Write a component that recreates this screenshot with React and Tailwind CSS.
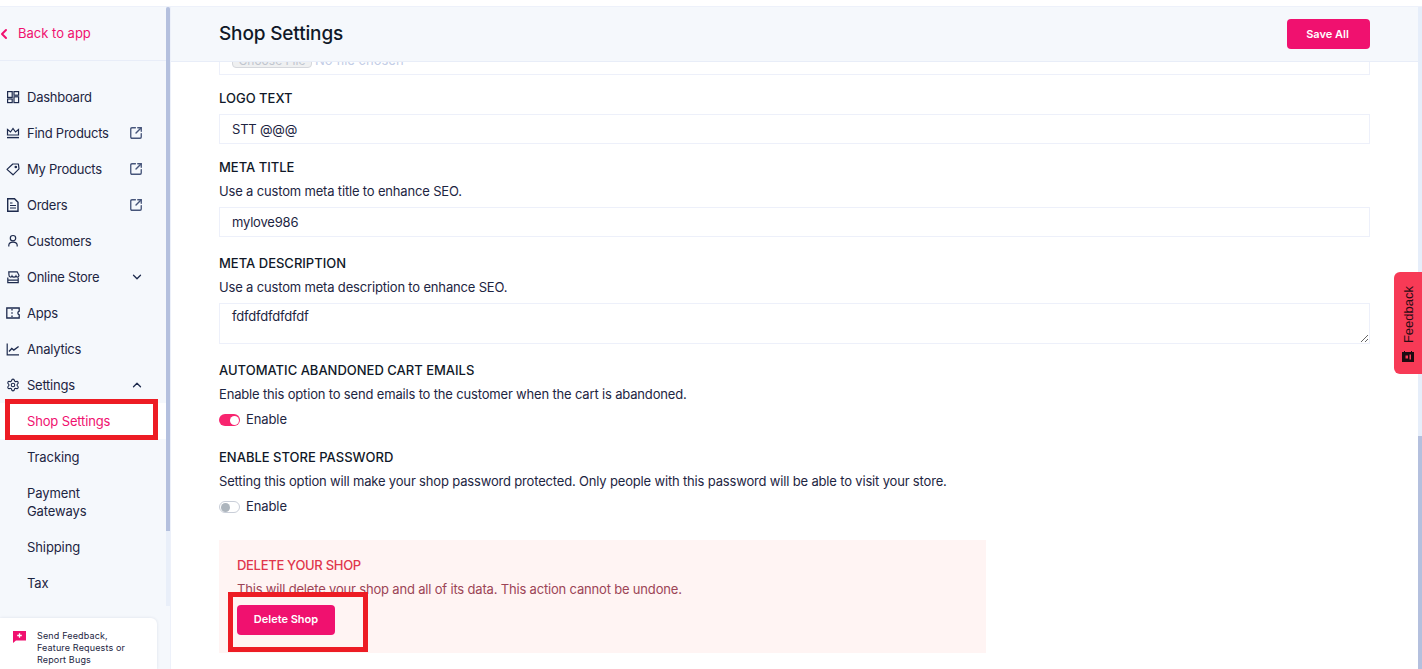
import React from 'react';
import { ChevronDown, ChevronLeft, ChevronUp, Settings, SquareArrowOutUpRight } from 'lucide-react';

const iconProps = {
  width: 14,
  height: 14,
  viewBox: '0 0 14 14',
  fill: 'none',
  stroke: '#1d2a4d',
  strokeWidth: 1.2,
  className: 'shrink-0',
};

const DashboardIcon = () => (
  <svg {...iconProps}>
    <rect x="1.600" y="1.600" width="4.600" height="5.800" />
    <rect x="8" y="1.600" width="4.600" height="3.600" />
    <rect x="1.600" y="9" width="4.600" height="3.600" />
    <rect x="8" y="6.800" width="4.600" height="5.800" />
  </svg>
);

const CrownIcon = () => (
  <svg {...iconProps}>
    <path d="M1.500 3.500l3 2.500L7 2.500 9.500 6l3-2.500V9h-11z" />
    <path d="M1 11.600h12" strokeWidth="1.400" />
  </svg>
);

const TagIcon = () => (
  <svg {...iconProps}>
    <path d="M1 7.400L6.800 2h5.600l.6 4.800-6 6z" strokeLinejoin="round" />
    <circle cx="9.800" cy="5" r="0.700" fill="#1d2a4d" />
  </svg>
);

const OrdersIcon = () => (
  <svg {...iconProps}>
    <path d="M1.700.8h6.800l3.500 3.500v8.900H1.700z" strokeWidth="1.400" />
    <path d="M4 5h2.500M4 7.500h6M4 10h6" />
  </svg>
);

const CustomerIcon = () => (
  <svg {...iconProps}>
    <circle cx="7" cy="4.200" r="2.700" />
    <path d="M2.800 12.600V11.500c0-2 1.600-3.300 4.200-3.300s4.200 1.300 4.200 3.300v1.100" />
  </svg>
);

const StoreIcon = () => (
  <svg {...iconProps}>
    <path d="M2.800 1.800h8.400l1.800 3.500c0 2-2.400 2.300-3 .7-.6 1.600-3.400 1.600-4 0-.6 1.600-3 1.300-3-.7z" />
    <path d="M1.800 7.500v5.200h10.400V7.500M1.800 10.200h10.400" />
  </svg>
);

const AppsIcon = () => (
  <svg {...iconProps}>
    <path d="M.8 2h12.400v3.200c-1.800.6-1.800 3 0 3.600V12H.8z" strokeWidth="1.300" />
    <path d="M6 3v1.400M6 6.300v1.400M6 9.600V11" strokeWidth="1.300" />
  </svg>
);

const AnalyticsIcon = () => (
  <svg {...iconProps}>
    <path d="M1.200 1.500v11.300h11.800" />
    <path d="M3 9.500l2.800-3 2 1.600L12.600 4.400" strokeWidth="1.300" />
  </svg>
);

const GearIcon = () => <Settings size={14} strokeWidth={1.9} className="shrink-0 text-[#1d2a4d]" />;

const navItems = [
  { label: 'Dashboard', icon: DashboardIcon },
  { label: 'Find Products', icon: CrownIcon, external: true },
  { label: 'My Products', icon: TagIcon, external: true },
  { label: 'Orders', icon: OrdersIcon, external: true },
  { label: 'Customers', icon: CustomerIcon },
  { label: 'Online Store', icon: StoreIcon, chevron: 'down' },
  { label: 'Apps', icon: AppsIcon },
  { label: 'Analytics', icon: AnalyticsIcon },
  { label: 'Settings', icon: GearIcon, chevron: 'up' },
];

const subItems = ['Tracking', 'Payment Gateways', 'Shipping', 'Tax'];

const NavRow = ({ item }) => {
  const Icon = item.icon;
  return (
    <div className="flex items-center h-9 pl-[6px] pr-[22px] text-[13px] leading-[18px] text-[#1d2542]">
      <Icon />
      <span className="ml-[7px] flex-1 whitespace-nowrap tracking-[-0.25px]">{item.label}</span>
      {item.external && <SquareArrowOutUpRight size={14} strokeWidth={2.300} className="mr-[1px] text-[#46557a]" />}
      {item.chevron === 'down' && <ChevronDown size={14} strokeWidth={2.200} className="text-[#1d2a4d]" />}
      {item.chevron === 'up' && <ChevronUp size={14} strokeWidth={2.200} className="text-[#1d2a4d]" />}
    </div>
  );
};

const Sidebar = () => (
  <aside className="w-[171px] shrink-0 flex flex-col border-r border-[#edf1fa] bg-[#f5f8fc]">
    <div className="flex flex-1 min-h-0">
      <div className="w-[166px] overflow-hidden">
        {/* Back link */}
        <div className="h-[54px] flex items-center border-b border-[#e8edf8] text-[13px] text-[#f0116f]">
          <ChevronLeft size={16} strokeWidth={3} className="-ml-[4px]" />
          <span className="ml-[6px]">Back to app</span>
        </div>

        <nav className="pt-[18px]">
          {navItems.map((item) => (
            <NavRow key={item.label} item={item} />
          ))}
          <div className="py-[9px] pl-[27px] bg-white text-[13px] leading-[18px] text-[#f0116f] tracking-[-0.15px]">
            Shop Settings
          </div>
          {subItems.map((label) => (
            <div key={label} className="py-[9px] pl-[27px] pr-[40px] text-[13px] leading-[18px] text-[#1d2542] tracking-[-0.1px]">
              {label}
            </div>
          ))}
        </nav>
      </div>
      {/* Sidebar scrollbar */}
      <div className="w-1 bg-[#e9eff9] flex flex-col">
        <div className="h-[524px] bg-[#b4c0de] rounded-t-sm" />
      </div>
    </div>

    <div className="h-[63px] pt-3 shrink-0">
      <div className="w-[157px] h-[51px] bg-white rounded-tr-md shadow-[0_0_3px_rgba(30,50,100,0.12)] flex pl-[13px] pt-[13px]">
        <svg width="13" height="12" viewBox="0 0 13 12" className="shrink-0">
          <path d="M0 0h13v9.500H3L0 12z" fill="#f0116f" />
          <path d="M6.500 2.200v4.600M4.200 4.500h4.600" stroke="#fff" strokeWidth="1.300" />
        </svg>
        <p className="ml-[11px] -mt-[1px] text-[9px] leading-3 text-[#1d2542] tracking-[0.15px]">
          Send Feedback,
          <br />
          Feature Requests or
          <br />
          Report Bugs
        </p>
      </div>
    </div>
  </aside>
);

const FieldLabel = ({ children, className = '' }) => (
  <h3 className={`text-[13px] leading-5 font-medium text-[#101828] ${className}`}>{children}</h3>
);

const Help = ({ children, className = '' }) => (
  <p className={`text-[13px] leading-5 text-[#1d2542] tracking-[-0.17px] ${className}`}>{children}</p>
);

const TextBox = ({ value, className = '' }) => (
  <input
    readOnly
    value={value}
    className={`block w-full h-[30px] border border-[#edf0fa] px-3 text-[13px] text-[#1d2542] tracking-[-0.2px] outline-none ${className}`}
  />
);

const Toggle = ({ on }) => (
  <div className="flex items-center h-5">
    {on ? (
      <div className="w-[21px] h-3 rounded-full bg-[#f8256f] flex items-center justify-end pr-[1px]">
        <div className="w-[9px] h-[9px] rounded-full bg-white" />
      </div>
    ) : (
      <div className="w-[21px] h-3 rounded-full border border-[#c9ced8] bg-white flex items-center pl-[1px]">
        <div className="w-[9px] h-[9px] rounded-full bg-[#adb5bd]" />
      </div>
    )}
    <span className="ml-[6px] text-[13px] text-[#1d2542] tracking-[-0.1px]">Enable</span>
  </div>
);

const App = () => (
  <div className="relative h-[669px] w-[1422px] overflow-hidden bg-white font-['Inter',sans-serif]">
    <div className="h-[6px]" />
    <div className="flex h-[663px] border-t border-[#edf1fa]">
      <Sidebar />

      <div className="flex-1 min-w-0 flex">
        <main className="flex-1 min-w-0 flex flex-col overflow-hidden">
          {/* Header */}
          <header className="h-[55px] shrink-0 flex items-center justify-between bg-[#f5f8fc] border-b border-[#e8edf8] pl-[48px] pr-[48px] z-10">
            <h1 className="text-[19px] font-medium text-[#101828] tracking-[-0.15px]">Shop Settings</h1>
            <button className="w-[83px] h-[30px] rounded-sm bg-[#f0116f] text-white text-[11px] font-semibold pr-[2px]">
              Save All
            </button>
          </header>

          <div className="pl-[48px] pr-[48px]">
            {/* File input, scrolled mostly out of view */}
            <div className="h-[13px] border border-t-0 border-[#edf0fa] overflow-hidden pl-3">
              <div className="-mt-[12px] h-[18px] flex items-center text-[13px] text-[#c3cde6]">
                <span className="h-[18px] w-[80px] rounded-sm border border-[#d5d7dc] bg-[#eff0f1] text-center text-[12px] leading-5 text-[#c0c5cf]">
                  Choose File
                </span>
                <span className="ml-[3px] mt-[3px]">No file chosen</span>
              </div>
            </div>

            <FieldLabel className="mt-[13px]">LOGO TEXT</FieldLabel>
            <TextBox value="STT @@@" className="mt-[6px]" />

            <FieldLabel className="mt-[13px]">META TITLE</FieldLabel>
            <Help className="mt-[4px]">Use a custom meta title to enhance SEO.</Help>
            <TextBox value="mylove986" className="mt-[6px]" />

            <FieldLabel className="mt-[16px]">META DESCRIPTION</FieldLabel>
            <Help className="mt-[4px]">Use a custom meta description to enhance SEO.</Help>
            <textarea
              readOnly
              value="fdfdfdfdfdfdf"
              className="block w-full h-[41px] mt-[6px] border border-[#edf0fa] px-3 py-[3px] text-[13px] text-[#1d2542] tracking-[-0.2px] outline-none"
            />

            <FieldLabel className="mt-[16px]">AUTOMATIC ABANDONED CART EMAILS</FieldLabel>
            <Help className="mt-[4px]">Enable this option to send emails to the customer when the cart is abandoned.</Help>
            <div className="mt-[6px]">
              <Toggle on />
            </div>

            <FieldLabel className="mt-[17px]">ENABLE STORE PASSWORD</FieldLabel>
            <Help className="mt-[4px]">
              Setting this option will make your shop password protected. Only people with this password will be able to visit your store.
            </Help>
            <div className="mt-[6px]">
              <Toggle />
            </div>

            {/* Danger zone */}
            <section className="mt-[23px] w-[767px] h-[113px] bg-[#fff4f3] pl-[18px] pt-[15px]">
              <h3 className="text-[13px] leading-5 font-medium text-[#e0364c] tracking-[-0.3px]">DELETE YOUR SHOP</h3>
              <p className="mt-[4px] text-[13px] leading-5 text-[#9c4456] tracking-[-0.18px]">
                This will delete your shop and all of its data. This action cannot be undone.
              </p>
              <button className="mt-[6px] block w-[98px] h-[30px] rounded-sm bg-[#f0116f] text-white text-[11px] font-semibold pb-[1px]">
                Delete Shop
              </button>
            </section>
          </div>
        </main>

        {/* Page scrollbar */}
        <div className="w-1 shrink-0 bg-[#e6eefa] flex flex-col">
          <div className="h-[429px]" />
          <div className="flex-1 bg-[#b4c0de]" />
        </div>
      </div>
    </div>

    {/* Feedback tab */}
    <div className="absolute left-[1394px] top-[272px] w-[28px] h-[102px] rounded-l-md bg-[#f73a56] flex flex-col items-center gap-2 pt-[14px]">
      <span className="[writing-mode:vertical-rl] rotate-180 font-['Liberation_Sans',sans-serif] text-[13px] leading-none text-[#2a0c14]">
        Feedback
      </span>
      <svg width="12" height="11" viewBox="0 0 12 11">
        <path d="M0 1h2V0h1v1h6V0h1v1h2v10H0z" fill="#1b0b10" />
        <path d="M3.500 4.500h2.500v3H3.500zM7.500 3.500h1.500v5H7.500z" fill="#f73a56" />
      </svg>
    </div>

    {/* Annotation boxes drawn over the screenshot */}
    <div className="absolute left-[5px] top-[399px] w-[153px] h-[41px] border-[5px] border-[#ed1c24]" />
    <div className="absolute left-[228px] top-[592px] w-[140px] h-[60px] border-[5px] border-[#ed1c24]" />
  </div>
);

export default App;
